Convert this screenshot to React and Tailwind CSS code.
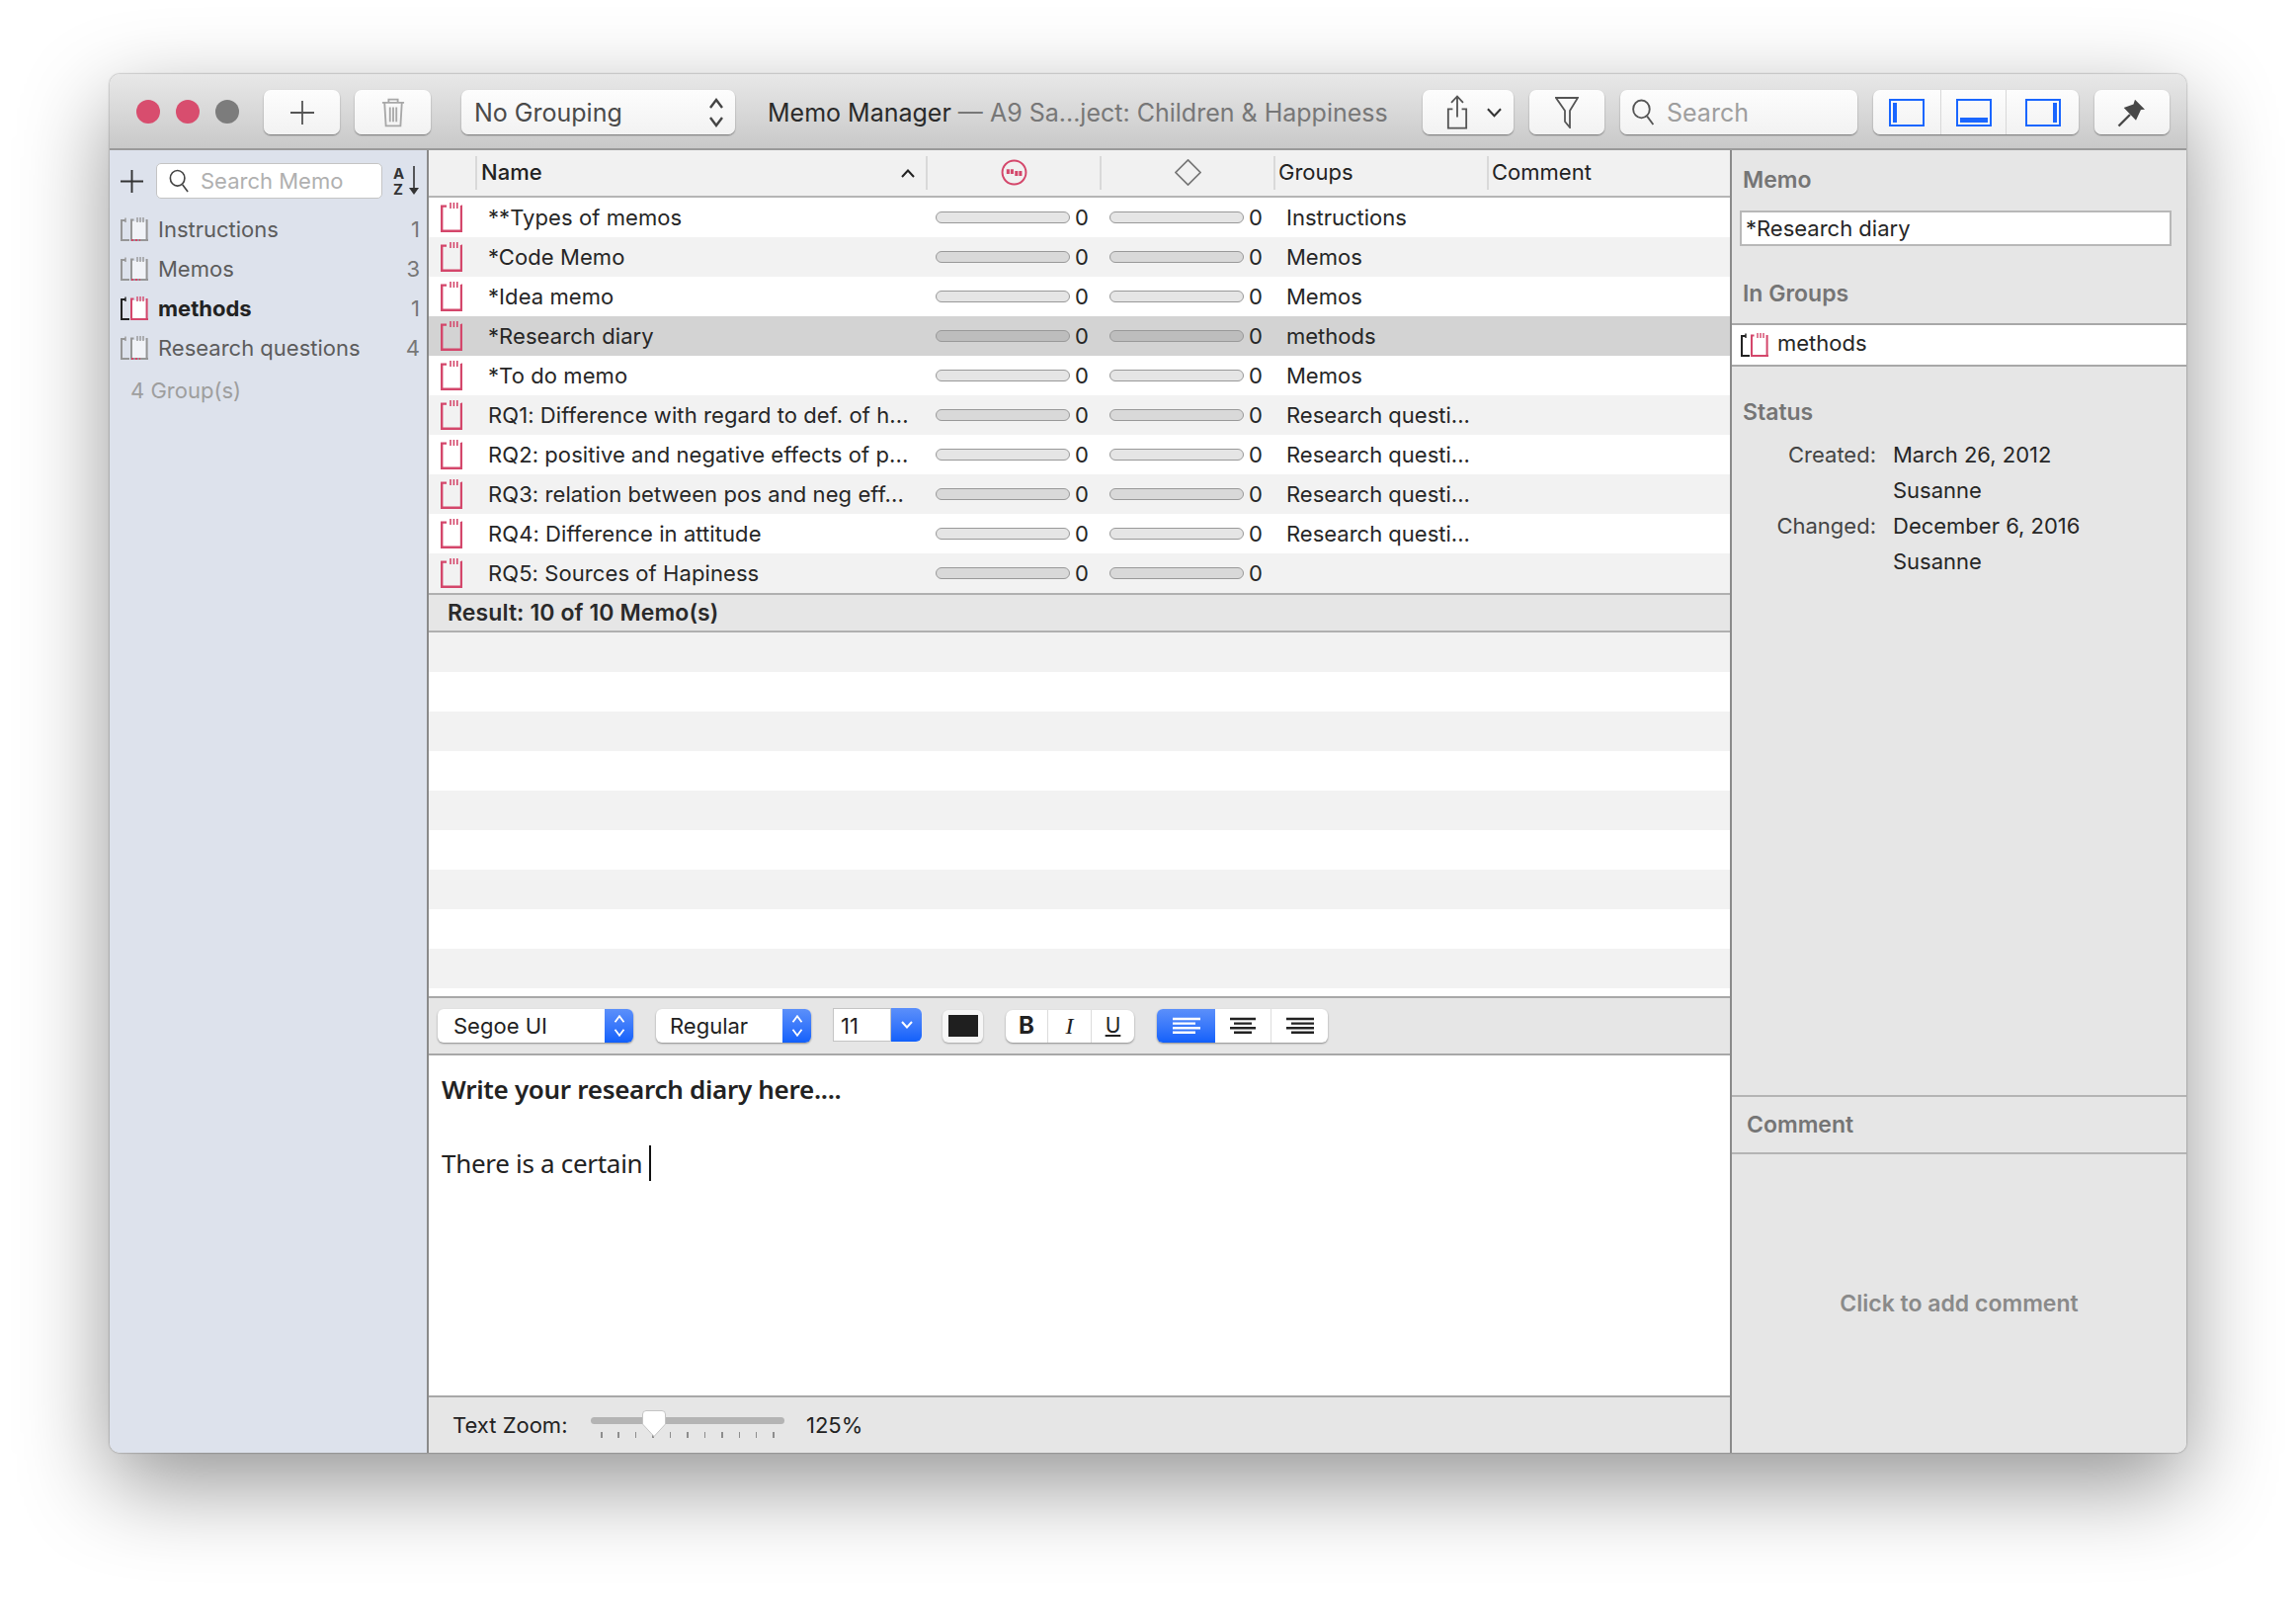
import React from "react";

const memos = [
  ["**Types of memos", "Instructions"],
  ["*Code Memo", "Memos"],
  ["*Idea memo", "Memos"],
  ["*Research diary", "methods"],
  ["*To do memo", "Memos"],
  ["RQ1: Difference with regard to def. of h...", "Research questi..."],
  ["RQ2: positive and negative effects of p...", "Research questi..."],
  ["RQ3: relation between pos and neg eff...", "Research questi..."],
  ["RQ4: Difference in attitude", "Research questi..."],
  ["RQ5: Sources of Hapiness", ""],
];

const RED = "#d4476b";

function MemoIcon({ color = RED, className = "" }) {
  return (
    <svg viewBox="0 0 22 30" className={`w-[22px] h-[30px] shrink-0 ${className}`} fill="none">
      <path d="M1.2 30V3.6H6 M20.8 3.6H22 M21 3V30 M0 28.8H22" stroke={color} strokeWidth="2.4" />
      <path d="M10 0V6 M13.4 0V6 M16.8 0V6" stroke={color} strokeWidth="1.6" />
    </svg>
  );
}

function GroupIcon({ active = false }) {
  const back = active ? "#222" : "#969696";
  const front = active ? RED : "#969696";
  return (
    <svg viewBox="0 0 28 24" className="w-[28px] h-[24px] shrink-0" fill="none">
      <path d="M1 24V3H5 M1 23H9" stroke={back} strokeWidth="2" />
      <path d="M5 0.5V5" stroke={back} strokeWidth="1.4" />
      <rect x="12" y="4" width="13.6" height="18" fill="#fff" opacity={active ? 1 : 0.6} />
      <path d="M11 24V2.6H13.5 M26.6 2V24 M10 23H28" stroke={front} strokeWidth="2" />
      <path d="M17 0V5 M20 0V5 M23 0V5" stroke={front} strokeWidth="1.4" />
      {!active && <path d="M11 23H20" stroke="#d4476b" strokeWidth="2" strokeDasharray="2 2" />}
    </svg>
  );
}

function Magnifier({ className = "", color = "#666" }) {
  return (
    <svg viewBox="0 0 22 26" className={className} fill="none" stroke={color} strokeWidth="1.8">
      <ellipse cx="9.5" cy="10" rx="8" ry="8.6" />
      <path d="M15 17L21 25" />
    </svg>
  );
}

function ToolButton({ className = "", children }) {
  return (
    <div className={`h-[45px] shrink-0 rounded-[7px] bg-gradient-to-b from-[#fdfdfd] to-[#f2f2f2] shadow-[0_1px_1.5px_rgba(0,0,0,0.45)] flex items-center ${className}`}>
      {children}
    </div>
  );
}

function UpDown({ color = "#333", className = "" }) {
  return (
    <svg viewBox="0 0 16 32" className={className} fill="none" stroke={color} strokeWidth="2.4">
      <path d="M2 11L8 3L14 11 M2 21L8 29L14 21" />
    </svg>
  );
}

function Toolbar() {
  return (
    <div className="h-[77px] shrink-0 flex items-center pt-[2px] bg-gradient-to-b from-[#e8e8e8] to-[#c9c9c9] border-b-2 border-[#9a9a9a]">
      <div className="flex gap-[16px] ml-[27px] mb-[2px]">
        <div className="w-[24px] h-[24px] rounded-full bg-[#d84d6e]" />
        <div className="w-[24px] h-[24px] rounded-full bg-[#d84d6e]" />
        <div className="w-[24px] h-[24px] rounded-full bg-[#7c7c7c]" />
      </div>
      <ToolButton className="w-[77px] ml-[25px] justify-center">
        <svg viewBox="0 0 24 24" className="w-[24px] h-[24px]" stroke="#555" strokeWidth="1.8"><path d="M12 0V24M0 12H24" /></svg>
      </ToolButton>
      <ToolButton className="w-[77px] ml-[15px] justify-center">
        <svg viewBox="0 0 26 32" className="w-[24px] h-[30px]" fill="none" stroke="#a8a8a8" strokeWidth="2">
          <path d="M1 5H25 M8 5V1.5H18V5 M3.5 5L5 30.5H21L22.5 5 M9.5 10V26 M13 10V26 M16.5 10V26" />
        </svg>
      </ToolButton>
      <ToolButton className="w-[277px] ml-[31px] pl-[13px] pr-[11px] justify-between text-[25px] text-[#4a4a4a]">
        <span className="pt-[2px]">No Grouping</span>
        <UpDown className="w-[16px] h-[32px]" color="#444" />
      </ToolButton>
      <div className="ml-[33px] w-[663px] text-[25px] whitespace-nowrap pt-[3px]">
        <span className="text-[#2a2a2a]">Memo Manager</span>
        <span className="text-[#777777]"> — A9 Sa...ject: Children &amp; Happiness</span>
      </div>
      <ToolButton className="w-[92px] pl-[24px]">
        <svg viewBox="0 0 24 38" className="w-[22px] h-[36px]" fill="none" stroke="#555" strokeWidth="2">
          <path d="M12 24V1 M5.5 8L12 1L18.5 8 M7 15H2V36H22V15H17" />
        </svg>
        <svg viewBox="0 0 16 10" className="w-[15px] h-[10px] ml-[19px]" fill="none" stroke="#333" strokeWidth="2.2"><path d="M1 1L8 8.5L15 1" /></svg>
      </ToolButton>
      <ToolButton className="w-[76px] ml-[16px] justify-center">
        <svg viewBox="0 0 24 32" className="w-[24px] h-[32px]" fill="none" stroke="#555" strokeWidth="1.8">
          <path d="M1 1H23L15 14V31L10 25V14Z" />
        </svg>
      </ToolButton>
      <ToolButton className="w-[240px] ml-[16px] pl-[11px] text-[25px] text-[#9e9e9e]">
        <Magnifier className="w-[24px] h-[27px]" color="#555" />
        <span className="ml-[12px] pt-[2px]">Search</span>
      </ToolButton>
      <ToolButton className="w-[208px] ml-[16px]">
        <div className="w-[69px] h-full flex items-center justify-center border-r border-[#d8d8d8]">
          <div className="w-[36px] h-[28px] border-2 border-[#1a66ff] flex"><div className="w-[4px] ml-[2px] my-[2px] bg-[#1a66ff]" /></div>
        </div>
        <div className="w-[66px] h-full flex items-center justify-center border-r border-[#d8d8d8]">
          <div className="w-[36px] h-[28px] border-2 border-[#1a66ff] flex items-end"><div className="h-[5px] mx-[2px] mb-[2px] flex-1 bg-[#1a66ff]" /></div>
        </div>
        <div className="flex-1 h-full flex items-center justify-center">
          <div className="w-[36px] h-[28px] border-2 border-[#1a66ff] flex justify-end"><div className="w-[4px] mr-[2px] my-[2px] bg-[#1a66ff]" /></div>
        </div>
      </ToolButton>
      <ToolButton className="w-[76px] ml-[16px] justify-center">
        <svg viewBox="0 0 30 30" className="w-[30px] h-[30px]" fill="#484848">
          <path d="M18 1.7L28 11.7L24 12L19 22.7L6.7 10L16.5 6.5Z" />
          <path d="M13 17L1.5 28.5" stroke="#484848" strokeWidth="2.4" fill="none" />
        </svg>
      </ToolButton>
    </div>
  );
}

function SidebarRow({ name, count, active }) {
  return (
    <div className="h-[40px] flex items-center pl-[11px] pr-[7px]">
      <GroupIcon active={active} />
      <span className={`ml-[10px] flex-1 ${active ? "font-bold text-[#222]" : "text-[#5c5c5c]"}`}>{name}</span>
      <span className="text-[#777]">{count}</span>
    </div>
  );
}

function Sidebar() {
  return (
    <div className="w-[323px] shrink-0 bg-[#dde2ec] border-r-2 border-[#8a8a8a] text-[22px]">
      <div className="h-[50px] mt-[6px] flex items-center pl-[11px]">
        <svg viewBox="0 0 24 24" className="w-[23px] h-[23px] shrink-0" stroke="#333" strokeWidth="2"><path d="M12 0V24M0 12H24" /></svg>
        <div className="ml-[13px] w-[229px] h-[36px] rounded-[5px] bg-white border border-[#c4c4c4] flex items-center pl-[12px] text-[#b0b0b0]">
          <Magnifier className="w-[20px] h-[24px] shrink-0" color="#444" />
          <span className="ml-[12px] whitespace-nowrap">Search Memo</span>
        </div>
        <div className="ml-[11px] w-[26px] h-[30px] flex justify-between">
          <div className="text-[#333] font-bold text-[15px] leading-[16px]">A<br />Z</div>
          <svg viewBox="0 0 10 30" className="w-[10px] h-[30px] shrink-0" stroke="#333" fill="#333">
            <path d="M5 0V24" strokeWidth="1.6" />
            <path d="M0 22H10L5 29Z" strokeWidth="0" />
          </svg>
        </div>
      </div>
      <div className="mt-[4px]">
        <SidebarRow name="Instructions" count="1" />
        <SidebarRow name="Memos" count="3" />
        <SidebarRow name="methods" count="1" active />
        <SidebarRow name="Research questions" count="4" />
      </div>
      <div className="pl-[21px] mt-[3px] text-[#9e9e9e] h-[40px] flex items-center">4 Group(s)</div>
    </div>
  );
}

function HeaderCell({ className = "", children }) {
  return (
    <div className={`shrink-0 h-full flex items-center ${className}`}>
      <div className="w-[2px] h-[34px] bg-[#d9d9d9] shrink-0" />
      {children}
    </div>
  );
}

function TableHeader() {
  return (
    <div className="h-[48px] shrink-0 flex items-center bg-[#f1f1f1] border-b-2 border-[#b5b5b5] text-[22px] text-[#222]">
      <div className="w-[47px] shrink-0" />
      <HeaderCell className="w-[456px]">
        <span className="ml-[4px] flex-1 font-medium pb-[2px]">Name</span>
        <svg viewBox="0 0 14 9" className="w-[14px] h-[9px] mr-[11px]" fill="none" stroke="#222" strokeWidth="2"><path d="M1 8L7 1.5L13 8" /></svg>
      </HeaderCell>
      <HeaderCell className="w-[176px]">
        <svg viewBox="0 0 28 28" className="w-[27px] h-[27px] ml-[74px] -mt-[2px]" fill="none">
          <circle cx="14" cy="14" r="12.4" stroke={RED} strokeWidth="2" />
          <path d="M6 10.5H9.2V15.5H6Z M10.2 10.5H13.4V15.5H10.2Z M14.8 12.5H18V17.5H14.8Z M19 12.5H22.2V17.5H19Z" fill={RED} />
        </svg>
      </HeaderCell>
      <HeaderCell className="w-[176px]">
        <svg viewBox="0 0 28 28" className="w-[27px] h-[27px] ml-[74px] -mt-[2px]" fill="none" stroke="#777" strokeWidth="1.8">
          <path d="M14 1L27 14L14 27L1 14Z" />
        </svg>
      </HeaderCell>
      <HeaderCell className="w-[216px]"><span className="ml-[3px] pb-[2px]">Groups</span></HeaderCell>
      <HeaderCell className="flex-1"><span className="ml-[3px] pb-[2px]">Comment</span></HeaderCell>
    </div>
  );
}

function Bar() {
  return <div className="w-[136px] h-[12px] rounded-full bg-black/[0.1] border border-[#999999] shrink-0" />;
}

function MemoRow({ name, group, index }) {
  const bg = index === 3 ? "bg-[#d3d3d3]" : index % 2 === 0 ? "bg-white" : "bg-[#f2f2f2]";
  return (
    <div className={`h-[40px] flex items-center text-[22px] text-[#262626] ${bg}`}>
      <div className="w-[513px] shrink-0 flex items-center pl-[12px]">
        <MemoIcon />
        <span className="ml-[26px] whitespace-nowrap tracking-[0.08px]">{name}</span>
      </div>
      <div className="w-[176px] shrink-0 flex items-center">
        <Bar />
        <span className="ml-[5px]">0</span>
      </div>
      <div className="w-[179px] shrink-0 flex items-center">
        <Bar />
        <span className="ml-[5px]">0</span>
      </div>
      <span className="whitespace-nowrap">{group}</span>
    </div>
  );
}

function FormatSelect({ label, className, textClass = "", blueClass }) {
  return (
    <div className={`h-[34px] shrink-0 rounded-[6px] bg-white shadow-[0_1px_2px_rgba(0,0,0,0.4)] flex items-center overflow-hidden text-[22px] text-[#222] ${className}`}>
      <span className={`flex-1 ${textClass}`}>{label}</span>
      <div className={`h-full flex items-center justify-center bg-gradient-to-b from-[#5b8ffa] to-[#1160fb] ${blueClass}`}>
        <UpDown color="#fff" className="w-[12px] h-[26px]" />
      </div>
    </div>
  );
}

function AlignIcon({ lines, color }) {
  return (
    <svg viewBox="0 0 30 18" className="w-[30px] h-[18px]" stroke={color} strokeWidth="2.4">
      {lines.map(([a, b], i) => <path key={i} d={`M${a} ${2 + i * 4.6}H${b}`} />)}
    </svg>
  );
}

function FormatBar() {
  return (
    <div className="h-[60px] shrink-0 flex items-center bg-[#e6e6e6] border-y-2 border-[#a8a8a8] pl-[9px]">
      <FormatSelect label="Segoe UI" className="w-[198px]" textClass="pl-[16px]" blueClass="w-[29px]" />
      <FormatSelect label="Regular" className="w-[157px] ml-[23px]" textClass="pl-[14px]" blueClass="w-[29px]" />
      <div className="w-[90px] h-[34px] ml-[22px] shrink-0 flex items-center rounded-r-[6px] bg-white overflow-hidden text-[22px] text-[#222] -mt-[3px]">
        <span className="flex-1 pl-[7px] border border-[#c4c4c4] h-full leading-[34px]">11</span>
        <div className="w-[31px] h-full flex items-center justify-center bg-gradient-to-b from-[#5b8ffa] to-[#1160fb]">
          <svg viewBox="0 0 12 8" className="w-[12px] h-[8px]" fill="none" stroke="#fff" strokeWidth="2"><path d="M1 1L6 6.5L11 1" /></svg>
        </div>
      </div>
      <div className="w-[41px] h-[33px] ml-[21px] shrink-0 rounded-[6px] bg-[#f6f6f6] shadow-[0_1px_2px_rgba(0,0,0,0.3)] flex items-center justify-center">
        <div className="w-[30px] h-[22px] bg-[#1f1f1f]" />
      </div>
      <div className="w-[130px] h-[33px] ml-[23px] shrink-0 rounded-[7px] bg-white shadow-[0_1px_2px_rgba(0,0,0,0.4)] flex items-center text-[24px] text-[#222]">
        <div className="w-[43px] h-full flex items-center justify-center font-bold border-r border-[#dcdcdc]">B</div>
        <div className="w-[44px] h-full flex items-center justify-center italic font-['Liberation_Serif',serif] border-r border-[#dcdcdc]">I</div>
        <div className="flex-1 h-full flex items-center justify-center underline text-[21px]">U</div>
      </div>
      <div className="w-[173px] h-[34px] ml-[23px] shrink-0 rounded-[6px] bg-white shadow-[0_1px_2px_rgba(0,0,0,0.4)] flex items-center overflow-hidden">
        <div className="w-[59px] h-full flex items-center justify-center bg-gradient-to-b from-[#5b8ffa] to-[#1160fb]">
          <AlignIcon color="#fff" lines={[[1, 29], [1, 24], [1, 29], [1, 24]]} />
        </div>
        <div className="w-[57px] h-full flex items-center justify-center border-r border-[#dcdcdc]">
          <AlignIcon color="#222" lines={[[2, 28], [6, 24], [2, 28], [6, 24]]} />
        </div>
        <div className="flex-1 h-full flex items-center justify-center">
          <AlignIcon color="#222" lines={[[1, 29], [6, 29], [1, 29], [6, 29]]} />
        </div>
      </div>
    </div>
  );
}

function Editor() {
  return (
    <div className="h-[344px] shrink-0 bg-white pl-[13px] pt-[16px] text-[26px] text-[#222] font-['Noto_Sans',sans-serif] tracking-[-0.3px]">
      <div className="font-semibold h-[36px] leading-[36px]">Write your research diary here....</div>
      <div className="h-[38px]" />
      <div className="h-[38px] leading-[38px] flex items-center">
        <span>There is a certain</span>
        <span className="w-[2px] h-[36px] bg-[#111] ml-[7px]" />
      </div>
    </div>
  );
}

function ZoomBar() {
  const ticks = [0, 1, 2, 3, 4, 5, 6, 7, 8, 9, 10];
  return (
    <div className="h-[58px] shrink-0 bg-[#e6e6e6] border-t-2 border-[#a8a8a8] flex items-center pl-[24px] text-[22px] text-[#222]">
      <span className="w-[140px] shrink-0">Text Zoom:</span>
      <div className="relative w-[196px] h-[30px] shrink-0">
        <div className="absolute left-0 right-0 top-[7px] h-[7px] rounded-full bg-[#b4b4b4]" />
        <div className="absolute left-[10px] right-[10px] top-[22px] flex justify-between">
          {ticks.map((t) => <div key={t} className="w-[1.5px] h-[6px] bg-[#8d8d8d]" />)}
        </div>
        <svg viewBox="0 0 24 27" className="absolute left-[52px] top-0 w-[24px] h-[27px]">
          <path d="M4 0.5H20A3.5 3.5 0 0 1 23.5 4V14L12 26.5L0.5 14V4A3.5 3.5 0 0 1 4 0.5Z" fill="#fff" stroke="#c4c4c4" />
        </svg>
      </div>
      <span className="ml-[22px]">125%</span>
    </div>
  );
}

function CenterColumn() {
  const stripes = Array.from({ length: 10 });
  return (
    <div className="flex-1 min-w-0 flex flex-col">
      <TableHeader />
      <div>
        {memos.map(([n, g], i) => <MemoRow key={n} name={n} group={g} index={i} />)}
      </div>
      <div className="h-[40px] shrink-0 bg-[#e6e6e6] border-y-2 border-[#b0b0b0] flex items-center pl-[19px] text-[23px] font-semibold tracking-[0.1px] text-[#2a2a2a]">
        Result: 10 of 10 Memo(s)
      </div>
      <div className="flex-1 min-h-0 overflow-hidden">
        {stripes.map((_, i) => <div key={i} className={`h-[40px] ${i % 2 === 0 ? "bg-[#f2f2f2]" : "bg-white"}`} />)}
      </div>
      <FormatBar />
      <Editor />
      <ZoomBar />
    </div>
  );
}

function Section({ className = "", children }) {
  return <div className={`text-[23px] font-semibold text-[#757575] pl-[11px] ${className}`}>{children}</div>;
}

function Inspector() {
  const status = [
    ["Created:", "March 26, 2012"],
    ["", "Susanne"],
    ["Changed:", "December 6, 2016"],
    ["", "Susanne"],
  ];
  return (
    <div className="w-[462px] shrink-0 bg-[#e6e6e6] border-l-2 border-[#8a8a8a] flex flex-col text-[22px] text-[#262626]">
      <Section className="mt-[16px] h-[28px] leading-[28px]">Memo</Section>
      <div className="ml-[8px] mr-[15px] mt-[17px] h-[36px] bg-white border-2 border-[#b8b8b8] flex items-center pl-[4px] pt-[1px]">*Research diary</div>
      <Section className="mt-[34px] h-[28px] leading-[28px]">In Groups</Section>
      <div className="mt-[16px] h-[44px] bg-white border-y-2 border-[#a8a8a8] flex items-center pl-[9px]">
        <GroupIcon active />
        <span className="ml-[9px] pb-[3px]">methods</span>
      </div>
      <Section className="mt-[32px] h-[28px] leading-[28px]">Status</Section>
      <div className="mt-[11px]">
        {status.map(([a, b], i) => (
          <div key={i} className="h-[36px] flex items-center">
            <span className="w-[146px] text-right text-[#444]">{a}</span>
            <span className="ml-[17px]">{b}</span>
          </div>
        ))}
      </div>
      <div className="flex-1" />
      <div className="h-[60px] shrink-0 border-y-2 border-[#b4b4b4] flex items-center">
        <Section className="pl-[15px]">Comment</Section>
      </div>
      <div className="h-[302px] shrink-0 flex items-center justify-center text-[23px] font-semibold text-[#8a8a8a]">
        Click to add comment
      </div>
    </div>
  );
}

export default function App() {
  return (
    <div className="w-[2324px] h-[1618px] bg-white pl-[111px] pt-[75px] overflow-hidden font-['Inter','Liberation_Sans',sans-serif]">
      <div className="w-[2102px] h-[1395px] rounded-[10px] overflow-hidden flex flex-col shadow-[0_32px_90px_rgba(0,0,0,0.42),0_0_2px_rgba(0,0,0,0.5)]">
        <Toolbar />
        <div className="flex-1 min-h-0 flex">
          <Sidebar />
          <CenterColumn />
          <Inspector />
        </div>
      </div>
    </div>
  );
}
